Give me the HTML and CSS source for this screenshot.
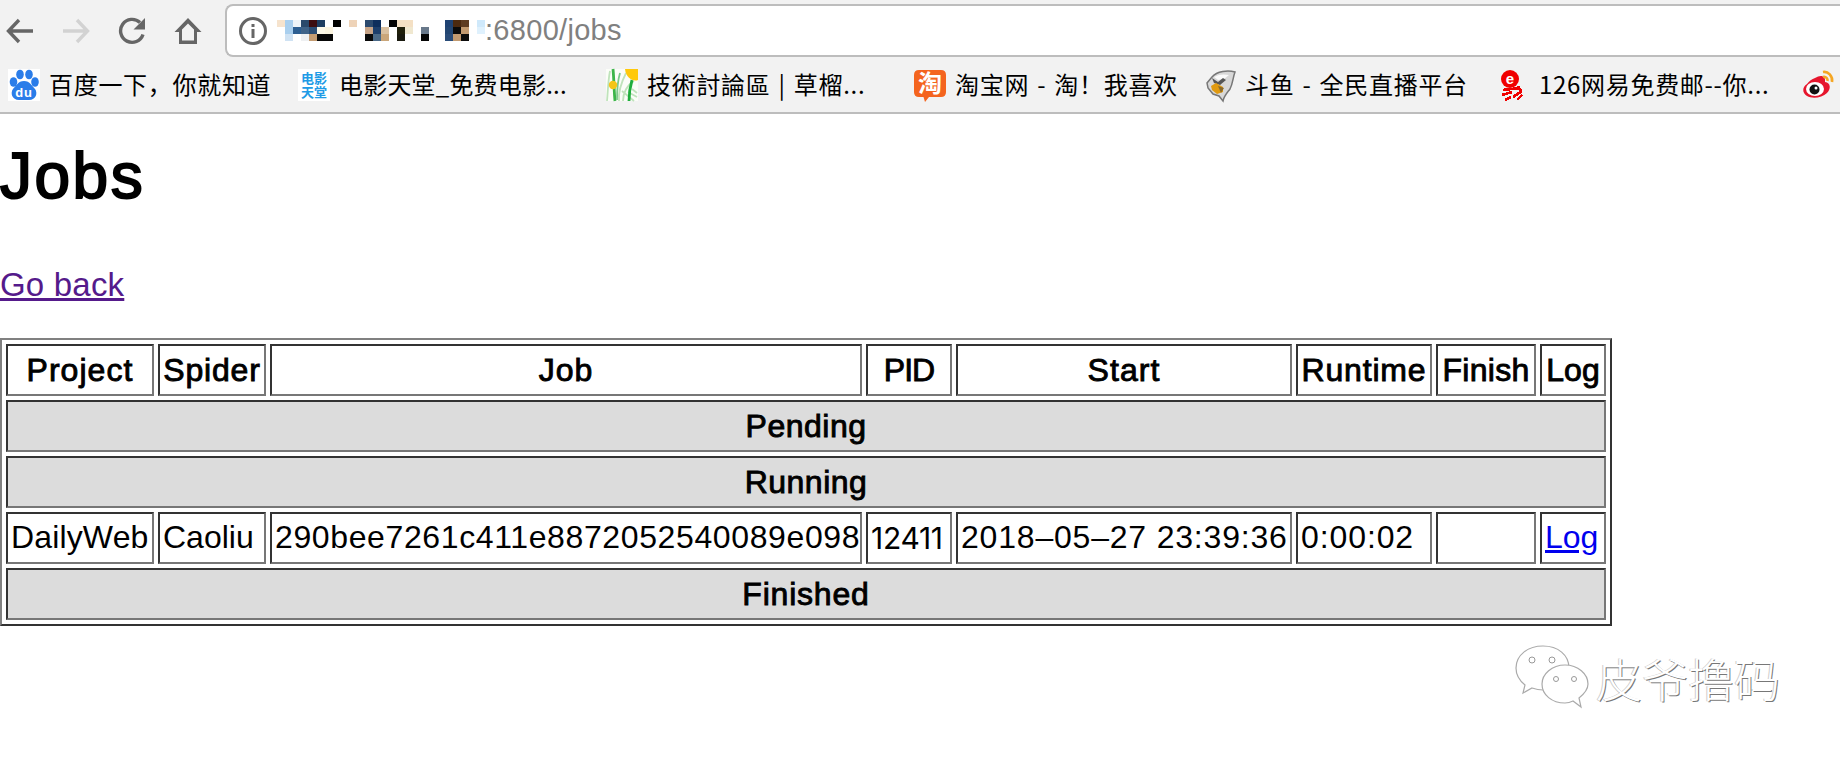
FILE: index.html
```html
<!DOCTYPE html>
<html lang="en">
<head>
<meta charset="utf-8">
<title>Jobs</title>
<link rel="stylesheet" href="styles.css">
</head>
<body>
<header class="chrome">
  <div class="toolbar">
    <nav class="nav">
      <svg class="ico" viewBox="0 0 28 28"><path d="M27 14H3M13 3 2.500 14 13 25" fill="none" stroke="#666" stroke-width="3.400"/></svg>
      <svg class="ico" viewBox="0 0 28 28"><path d="M1 14H25M15 3 25.500 14 15 25" fill="none" stroke="#d2d2d2" stroke-width="3.400"/></svg>
      <svg class="ico" viewBox="0 0 28 28"><path d="M25 17.500A11.500 11.500 0 1 1 22 5.500" fill="none" stroke="#666" stroke-width="3.400"/><path d="M27 1V12.500H15.500Z" fill="#666"/></svg>
      <svg class="ico" viewBox="0 0 28 28"><path d="M14 1 .5 15H5V27H23V15H27.500ZM14 6.500 20 12.500V23.500H8V12.500Z" fill="#666" fill-rule="evenodd"/></svg>
    </nav>
    <div class="address">
      <svg class="info" viewBox="0 0 28 28"><circle cx="14" cy="14" r="12.500" fill="none" stroke="#666" stroke-width="3"/><rect x="12.500" y="12" width="3" height="9" fill="#666"/><rect x="12.500" y="7" width="3" height="3" fill="#666"/></svg>
      <svg class="mosaic" viewBox="0 0 208 21" shape-rendering="crispEdges">
        <rect x="0" y="0" width="8" height="7" fill="#f6e3cd"/><rect x="8" y="0" width="8" height="7" fill="#a9cfee"/><rect x="16" y="0" width="8" height="7" fill="#eef4f8"/><rect x="24" y="0" width="8" height="7" fill="#2a4a6c"/><rect x="32" y="0" width="8" height="7" fill="#3c0d10"/><rect x="40" y="0" width="8" height="7" fill="#1d3d60"/><rect x="56" y="0" width="8" height="7" fill="#000"/><rect x="72" y="0" width="8" height="7" fill="#eed3b8"/><rect x="88" y="0" width="8" height="7" fill="#2c4a6e"/><rect x="96" y="0" width="8" height="7" fill="#0e2e5c"/><rect x="112" y="0" width="8" height="7" fill="#050505"/><rect x="120" y="0" width="16" height="7" fill="#f4e0c4"/><rect x="168" y="0" width="8" height="7" fill="#1f4272"/><rect x="176" y="0" width="8" height="7" fill="#4c2a10"/><rect x="184" y="0" width="8" height="7" fill="#5e3c22"/><rect x="200" y="0" width="8" height="7" fill="#cfe9fb"/>
        <rect x="8" y="7" width="8" height="7" fill="#a9cfee"/><rect x="16" y="7" width="8" height="7" fill="#2d5f92"/><rect x="24" y="7" width="8" height="7" fill="#3f6388"/><rect x="32" y="7" width="8" height="7" fill="#2b4d74"/><rect x="40" y="7" width="8" height="7" fill="#fdf8e8"/><rect x="48" y="7" width="8" height="7" fill="#fbf4e0"/><rect x="88" y="7" width="8" height="7" fill="#c7a488"/><rect x="96" y="7" width="8" height="7" fill="#1d3f6c"/><rect x="104" y="7" width="8" height="7" fill="#d9c0a0"/><rect x="120" y="7" width="8" height="7" fill="#20200c"/><rect x="128" y="7" width="8" height="7" fill="#f0e8d0"/><rect x="144" y="7" width="8" height="7" fill="#68788a"/><rect x="168" y="7" width="8" height="7" fill="#234672"/><rect x="176" y="7" width="8" height="7" fill="#0b0b0b"/><rect x="184" y="7" width="8" height="7" fill="#c29a70"/><rect x="200" y="7" width="8" height="7" fill="#dff1fd"/>
        <rect x="8" y="14" width="8" height="7" fill="#cfe2f3"/><rect x="24" y="14" width="8" height="7" fill="#eef0f2"/><rect x="32" y="14" width="8" height="7" fill="#c49c72"/><rect x="40" y="14" width="16" height="7" fill="#080808"/><rect x="88" y="14" width="8" height="7" fill="#0a0a0a"/><rect x="96" y="14" width="8" height="7" fill="#4b6a88"/><rect x="104" y="14" width="8" height="7" fill="#caa67a"/><rect x="120" y="14" width="8" height="7" fill="#1a1a10"/><rect x="144" y="14" width="8" height="7" fill="#050505"/><rect x="168" y="14" width="8" height="7" fill="#2a4c78"/><rect x="176" y="14" width="8" height="7" fill="#c29a70"/><rect x="184" y="14" width="8" height="7" fill="#0c0c0c"/>
      </svg>
      <span class="url">:6800/jobs</span>
    </div>
  </div>
  <div class="bookmarks">
    <a class="mark m290">
      <svg class="fav" viewBox="0 0 32 32"><rect width="32" height="32" fill="#fff"/><g fill="#2b7de9"><ellipse cx="5.500" cy="13" rx="3.800" ry="4.800"/><ellipse cx="12" cy="5.500" rx="3.800" ry="4.800"/><ellipse cx="21" cy="5.500" rx="3.800" ry="4.800"/><ellipse cx="27" cy="13" rx="3.800" ry="4.800"/><path d="M16 12C22 12 24 17 27 20 30 24 28 31 21 31H11C4 31 2 24 5 20 8 17 10 12 16 12Z"/></g><text x="16" y="28" class="fav-du">du</text></svg>
      <span>百度一下，你就知道</span>
    </a>
    <a class="mark m308 tight">
      <svg class="fav" viewBox="0 0 32 32"><rect width="32" height="32" fill="#fff"/><text x="16" y="14" class="fav-movie">电影</text><text x="16" y="28" class="fav-movie">天堂</text></svg>
      <span>电影天堂_免费电影...</span>
    </a>
    <a class="mark m308">
      <svg class="fav" viewBox="0 0 32 32"><rect width="32" height="32" fill="#fbfdf8"/><path d="M1 32C2 22 2 12 4 2M13 32C12 22 16 12 20 4M17 32C17 24 21 16 28 12M28 32 16 22M31 28 22 23M31 24 26 20" stroke="#bfe3bb" stroke-width="1.800" fill="none"/><path d="M9 32C8 22 8 10 7 0" stroke="#3cb54a" stroke-width="2.800" fill="none"/><path d="M11 31C11 21 11 14 14 4" stroke="#7cc98a" stroke-width="1.800" fill="none"/><path d="M23 32C23 25 24 18 26 11" stroke="#1fae3c" stroke-width="2.800" fill="none"/><path d="M19 0H32V11C27 13 20 9 19 0Z" fill="#ffc90a"/><circle cx="7" cy="16" r="4.200" fill="#f5c518"/></svg>
      <span>技術討論區 | 草榴...</span>
    </a>
    <a class="mark m290">
      <svg class="fav" viewBox="0 0 32 32"><path d="M5 1H27Q32 1 32 6V23Q32 28 27 28H15L11 33 9.500 28H5Q0 28 0 23V6Q0 1 5 1Z" fill="#f4641e"/><text x="16" y="23" class="fav-tao">淘</text></svg>
      <span>淘宝网 - 淘！我喜欢</span>
    </a>
    <a class="mark m294">
      <svg class="fav" viewBox="0 0 32 32"><path d="M8 8C13 2 24 1 31 3 29 8 29 14 26 20 23 24 20 27 19 32L15 27 9 25 4 19 3 14Z" fill="#d8d8d8" stroke="#777" stroke-width="1.500"/><path d="M10 8C15 5 20 5 25 6L20 10 14 11Z" fill="#fafafa"/><path d="M8 9 14 13 19 9 22 11 16 16 10 14Z" fill="#555"/><path d="M7 17 12 14 19 18 19 23 13 25 8 21Z" fill="#e09a10"/><path d="M14 17 20 19 17 24Z" fill="#8a6a2a"/></svg>
      <span>斗鱼 - 全民直播平台</span>
    </a>
    <a class="mark m304">
      <svg class="fav" viewBox="0 0 32 32"><circle cx="12" cy="10" r="9" fill="#f00000"/><text x="12" y="15" class="fav-126">e</text><path d="M5 21 22 19M4 26 14 23M15 28 24 22M7 31 13 28M19 31 24 26M20 17 23 22" stroke="#f00000" stroke-width="2.700" fill="none" shape-rendering="crispEdges"/></svg>
      <span>126网易免费邮--你...</span>
    </a>
    <a class="mark">
      <svg class="fav" viewBox="0 0 32 32"><path d="M13 9C19 5 24 7 23 13 29 14 29 20 25 24 20 29 10 30 5 27 0 24 0 18 5 15 7 12 10 10 13 9Z" fill="#e6162d"/><ellipse cx="13" cy="20" rx="9" ry="7" fill="#fff"/><circle cx="12.500" cy="20.500" r="5" fill="#111"/><circle cx="14" cy="19" r="1.500" fill="#fff"/><path d="M21 3C26 2 31 7 30 13M21 8C24 7 26 10 25.500 12" stroke="#f5a623" stroke-width="2.600" fill="none"/></svg>
    </a>
  </div>
</header>
<main>
  <h1 class="title">Jobs</h1>
  <p class="back"><a class="visited" href="#">Go back</a></p>
  <table class="jobs">
    <tr>
      <th class="c-project s11">Project</th><th class="c-spider s8">Spider</th><th class="c-job s11">Job</th><th class="c-pid n1">PID</th><th class="c-start s11">Start</th><th class="c-runtime s8">Runtime</th><th class="c-finish s3">Finish</th><th class="c-log">Log</th>
    </tr>
    <tr><th class="section s5" colspan="8">Pending</th></tr>
    <tr><th class="section s5" colspan="8">Running</th></tr>
    <tr>
      <td class="name">DailyWeb</td><td>Caoliu</td><td class="hash">290bee7261c411e8872052540089e098</td><td class="pid">12411</td><td class="date">2018–05–27 23:39:36</td><td class="time">0:00:02</td><td></td><td><a class="link" href="#">Log</a></td>
    </tr>
    <tr><th class="section s8" colspan="8">Finished</th></tr>
  </table>
</main>
<aside class="watermark">
  <svg class="wechat" viewBox="0 0 74 64"><g fill="#fff" stroke="#aaa" stroke-width="1.200"><path d="M28 1C13 1 1 10 1 23 1 30 5 36 10 40L8 48 17 43C20 44 24 45 28 45 43 45 54 35 54 23 54 10 43 1 28 1Z"/><path d="M50 20C37 20 27 29 27 39 27 50 37 58 50 58 53 58 56 57 58 56L66 62 64 53C69 49 73 45 73 39 73 29 63 20 50 20Z"/></g><g fill="#fff" stroke="#999"><circle cx="17" cy="15" r="3"/><circle cx="37" cy="15" r="3"/><circle cx="41" cy="34" r="2.500"/><circle cx="59" cy="34" r="2.500"/></g></svg>
  <span class="wm-text">皮爷撸码</span>
</aside>
</body>
</html>
```

FILE: styles.css
```css
* { box-sizing: border-box; }
html, body { margin: 0; padding: 0; background: #fff; }
body { font-family: "Liberation Sans", Arial, sans-serif; color: #000; height: 762px; overflow: hidden; position: relative; }

.chrome { background: #f2f2f2; height: 114px; border-bottom: 2px solid #bdbdbd; }
.toolbar { height: 57px; display: flex; align-items: flex-start; padding-top: 4px; }
.nav { display: flex; width: 225px; height: 52px; align-items: center; gap: 28px; padding-left: 6px; padding-top: 1px; }
.ico { width: 28px; height: 28px; flex: none; }
.address { flex: 1; height: 53px; background: #fff; border: 2px solid #bdbdbd; border-right: 0; border-radius: 8px 0 0 8px; display: flex; align-items: center; padding-left: 12px; }
.info { width: 28px; height: 28px; flex: none; }
.mosaic { width: 208px; height: 21px; margin-left: 10px; flex: none; }
.url { font-size: 29px; color: #808080; letter-spacing: .3px; }

.bookmarks { height: 55px; display: flex; align-items: flex-start; padding: 11px 0 0 8px; }
.mark { display: flex; align-items: center; height: 34px; font-family: "Noto Sans CJK SC", "Liberation Sans", sans-serif; font-size: 24px; letter-spacing: .7px; word-spacing: 2px; color: #000; white-space: nowrap; flex: none; }
.mark span { margin-bottom: 2px; line-height: 34px; }
.mark.tight { letter-spacing: .2px; }
.m290 { width: 290px; }
.m294 { width: 294px; }
.m304 { width: 304px; }
.m308 { width: 308px; }
.fav { width: 32px; height: 32px; margin-right: 9px; flex: none; overflow: visible; }
.fav-du { font: bold 13px "Liberation Sans", sans-serif; fill: #fff; text-anchor: middle; }
.fav-movie { font: bold 13px "Noto Sans CJK SC", sans-serif; fill: #1e9be6; text-anchor: middle; letter-spacing: 0; }
.fav-tao { font: bold 24px "Noto Sans CJK SC", sans-serif; fill: #fff; text-anchor: middle; letter-spacing: 0; }
.fav-126 { font: bold 15px "Liberation Sans", sans-serif; fill: #fff; text-anchor: middle; letter-spacing: 0; }

.title { font-size: 64px; font-weight: normal; -webkit-text-stroke: 2px #000; line-height: 74px; margin: 25px 0 0; letter-spacing: 2.500px; }
.back { font-size: 33px; line-height: 37px; margin: 53px 0 35px; letter-spacing: .2px; }
.visited { color: #551a8b; }
.link { color: #00e; }

.jobs { table-layout: fixed; width: 1612px; border-collapse: separate; border-spacing: 4px; border: 2px solid; border-color: #808080 #333 #333 #808080; font-size: 32px; }
.jobs th, .jobs td { height: 52px; border: 2px solid; border-color: #333 #777 #777 #333; white-space: nowrap; }
.jobs td { padding: 0 2px 1px 3px; text-align: left; }
.jobs th { padding: 0; text-align: center; font-weight: normal; -webkit-text-stroke: .9px #000; }
.jobs .section { background: #dcdcdc; }
.jobs .s3 { letter-spacing: .3px; }
.jobs .s5 { letter-spacing: .5px; }
.jobs .s8 { letter-spacing: .8px; }
.jobs .s11 { letter-spacing: 1.050px; }
.jobs .n1 { letter-spacing: -1px; }
.c-project { width: 148px; }
.c-spider { width: 108px; }
.c-job { width: 592px; }
.c-pid { width: 86px; }
.c-start { width: 336px; }
.c-runtime { width: 136px; }
.c-finish { width: 100px; }
.c-log { width: 66px; }
.name { letter-spacing: .15px; }
.hash { letter-spacing: .62px; }
.date { letter-spacing: .8px; }
.time { letter-spacing: .9px; }
.jobs .pid { font-family: Inter, "Liberation Sans", sans-serif; font-size: 30px; letter-spacing: -.3px; }

.watermark { position: absolute; left: 1515px; top: 645px; display: flex; align-items: center; gap: 7px; }
.wechat { width: 74px; height: 64px; flex: none; }
.wm-text { font-family: "Noto Sans CJK SC", sans-serif; font-weight: 300; font-size: 46px; line-height: 64px; color: #fff; text-shadow: 1px 1px 0 #777, -1px 0 0 #ccc; white-space: nowrap; }
```
